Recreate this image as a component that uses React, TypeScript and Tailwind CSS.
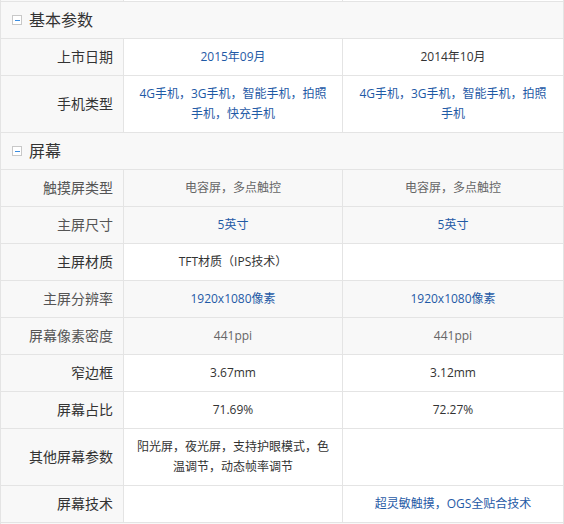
import React from 'react';

type Cell = { text: string; link?: boolean };

interface SpecRow {
  label: string;
  values: [Cell, Cell];
  tall?: boolean;
  same?: boolean;
}

interface Section {
  title: string;
  rows: SpecRow[];
}

const sections: Section[] = [
  {
    title: '基本参数',
    rows: [
      { label: '上市日期', values: [{ text: '2015年09月', link: true }, { text: '2014年10月' }] },
      {
        label: '手机类型',
        tall: true,
        values: [
          { text: '4G手机，3G手机，智能手机，拍照手机，快充手机', link: true },
          { text: '4G手机，3G手机，智能手机，拍照手机', link: true },
        ],
      },
    ],
  },
  {
    title: '屏幕',
    rows: [
      { label: '触摸屏类型', same: true, values: [{ text: '电容屏，多点触控' }, { text: '电容屏，多点触控' }] },
      { label: '主屏尺寸', same: true, values: [{ text: '5英寸', link: true }, { text: '5英寸', link: true }] },
      { label: '主屏材质', values: [{ text: 'TFT材质（IPS技术）' }, { text: '' }] },
      { label: '主屏分辨率', same: true, values: [{ text: '1920x1080像素', link: true }, { text: '1920x1080像素', link: true }] },
      { label: '屏幕像素密度', same: true, values: [{ text: '441ppi' }, { text: '441ppi' }] },
      { label: '窄边框', values: [{ text: '3.67mm' }, { text: '3.12mm' }] },
      { label: '屏幕占比', values: [{ text: '71.69%' }, { text: '72.27%' }] },
      {
        label: '其他屏幕参数',
        tall: true,
        values: [{ text: '阳光屏，夜光屏，支持护眼模式，色温调节，动态帧率调节' }, { text: '' }],
      },
      { label: '屏幕技术', values: [{ text: '' }, { text: '超灵敏触摸，OGS全贴合技术', link: true }] },
    ],
  },
];

function SectionHeader({ title }: { title: string }) {
  return (
    <div className="flex h-[37px] items-center border-b border-r border-[#e4e4e4] bg-[#f8f8f8] pl-[11px]">
      <span className="flex h-[10px] w-[10px] items-center justify-center border border-[#c8c8c8] bg-white">
        <span className="h-px w-[5px] bg-[#3b8de0]" />
      </span>
      <span className="ml-[7px] text-[16px] leading-none text-[#333]">{title}</span>
    </div>
  );
}

function ValueCell({ cell, same, wide }: { cell: Cell; same?: boolean; wide?: boolean }) {
  const color = cell.link ? 'text-[#1f5aa6]' : same ? 'text-[#666]' : 'text-[#333]';
  return (
    <div
      className={`flex items-center justify-center border-r border-[#e4e4e4] px-3 text-center text-[12px] leading-[20px] ${
        wide ? 'flex-1' : 'w-[219px]'
      } ${same ? 'bg-[#f8f8f8]' : 'bg-white'} ${color}`}
    >
      {cell.text}
    </div>
  );
}

function Row({ row }: { row: SpecRow }) {
  return (
    <div className={`flex border-b border-[#e4e4e4] ${row.tall ? 'h-[57px]' : 'h-[37px]'}`}>
      <div
        className={`flex w-[123px] items-center justify-end border-r border-[#e4e4e4] bg-[#f8f8f8] pr-[10px] text-[14px] leading-none ${
          row.same ? 'text-[#555]' : 'text-[#333]'
        }`}
      >
        {row.label}
      </div>
      <ValueCell cell={row.values[0]} same={row.same} />
      <ValueCell cell={row.values[1]} same={row.same} wide />
    </div>
  );
}

export default function App() {
  return (
    <div
      className="h-[524px] w-[564px] overflow-hidden border-l border-[#e4e4e4] bg-white"
      style={{ fontFamily: '"Open Sans", "Noto Sans CJK SC", sans-serif' }}
    >
      {/* tail of the previous row */}
      <div className="flex h-[2px] border-b border-[#e4e4e4]">
        <div className="w-[123px] border-r border-[#e4e4e4] bg-[#f8f8f8]" />
        <div className="w-[219px] border-r border-[#e4e4e4]" />
        <div className="flex-1 border-r border-[#e4e4e4]" />
      </div>
      {sections.map((section) => (
        <div key={section.title}>
          <SectionHeader title={section.title} />
          {section.rows.map((row) => (
            <Row key={row.label} row={row} />
          ))}
        </div>
      ))}
      <div className="h-[2px] border-r border-[#e4e4e4] bg-[#f8f8f8]" />
    </div>
  );
}
